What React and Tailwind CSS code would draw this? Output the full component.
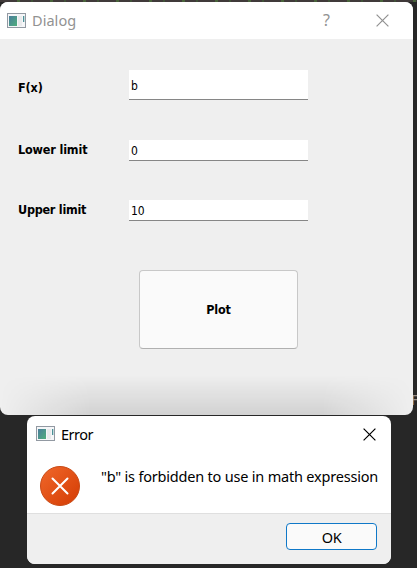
function AppIcon() {
  return (
    <svg width="19" height="16" viewBox="0 0 19 16" className="shrink-0">
      <defs>
        <linearGradient id="screen" x1="0" y1="0" x2="1" y2="1">
          <stop offset="0" stopColor="#4a7d9c" />
          <stop offset="1" stopColor="#4fae7c" />
        </linearGradient>
      </defs>
      <rect x="0.5" y="0.5" width="18" height="14" fill="#f5f6f8" stroke="#9299a2" />
      <rect x="2" y="3" width="8" height="10" fill="url(#screen)" />
      <rect x="11" y="3" width="4" height="10" fill="#e9eaec" />
      <rect x="16" y="3" width="1.3" height="6" fill="#4b9197" />
    </svg>
  );
}

function Cross({ className }) {
  return (
    <svg width="13" height="13" viewBox="0 0 13 13" className={className} fill="none" stroke="currentColor" strokeWidth="1.2">
      <path d="M.6.6l11.8 11.8M12.4.6L.6 12.4" />
    </svg>
  );
}

function Field({ label, value, rowClass, labelClass, inputClass }) {
  return (
    <div className={`flex pl-[18px] ${rowClass}`}>
      <label className={`w-[111px] shrink-0 font-['DejaVu_Sans_Condensed','DejaVu_Sans',sans-serif] text-[12.5px] leading-[20px] font-bold ${labelClass}`}>
        {label}
      </label>
      <div className={`flex w-[179px] items-center border-b border-[#868686] bg-white pt-[2px] pl-[2px] font-['DejaVu_Sans_Condensed','DejaVu_Sans',sans-serif] text-[12px] tracking-[-0.2px] ${inputClass}`}>
        {value}
      </div>
    </div>
  );
}

export default function App() {
  return (
    <div className="relative flex h-[568px] w-[417px] flex-col overflow-hidden bg-[#272727] pt-[2px] font-['Noto_Sans',sans-serif] text-black">
      <div className="absolute inset-x-0 top-0 h-[2px] bg-[repeating-linear-gradient(90deg,#403a3a_0_17px,#48633a_17px_20px,#403a3a_20px_31px,#3f5237_31px_33px)]" />
      <span className="absolute top-[390px] left-[411px] text-[14px] leading-[20px] text-[#9a8f86]">F</span>

      <section className="relative h-[413px] w-[413px] shrink-0 overflow-hidden rounded-[8px] bg-[#efefef]">
        <header className="flex h-[37px] items-center bg-white pr-[24px] pl-[7px] text-[#929292]">
          <AppIcon />
          <h1 className="-mt-[2px] ml-[6px] text-[14.5px] leading-[20px] tracking-[0.05px]">Dialog</h1>
          <span className="-mt-[2px] mr-[46px] ml-auto text-[16px] leading-[20px]">?</span>
          <Cross className="-mt-[1px]" />
        </header>
        <Field label="F(x)" value="b" rowClass="mt-[31px] h-[30px]" labelClass="mt-[8px] tracking-[-0.1px]" inputClass="h-[30px]" />
        <Field label="Lower limit" value="0" rowClass="mt-[40px] h-[21px]" labelClass="tracking-[-0.15px]" inputClass="h-[21px]" />
        <Field label="Upper limit" value="10" rowClass="mt-[39px] h-[21px]" labelClass="tracking-[-0.25px]" inputClass="h-[21px]" />
        <button className="mt-[49px] ml-[139px] flex h-[79px] w-[159px] items-center justify-center rounded-[4px] border border-[#c8c8c8] border-b-[#b0b0b0] bg-[#fafafa] pt-[2px] font-['DejaVu_Sans_Condensed','DejaVu_Sans',sans-serif] text-[12.5px] font-bold tracking-[-0.2px]">
          Plot
        </button>
        <div className="absolute right-0 bottom-0 left-0 h-[40px] bg-linear-to-b from-transparent to-black/12 mask-[linear-gradient(90deg,transparent,black_22%,black_78%,transparent)]" />
      </section>

      <section className="mt-[1px] ml-[27px] flex h-[148px] w-[364px] shrink-0 flex-col overflow-hidden rounded-[8px] bg-white">
        <header className="flex h-[36px] items-center pr-[15px] pl-[9px]">
          <AppIcon />
          <h2 className="ml-[6px] text-[14.5px] leading-[20px] tracking-[-0.5px]">Error</h2>
          <Cross className="ml-auto" />
        </header>
        <div className="flex h-[61px] pt-[14px] pl-[13px]">
          <svg width="40" height="40" viewBox="0 0 40 40" className="shrink-0">
            <defs>
              <linearGradient id="alert" x1="0" y1="0" x2="1" y2="1">
                <stop offset="0" stopColor="#f0682b" />
                <stop offset="1" stopColor="#d43b03" />
              </linearGradient>
            </defs>
            <circle cx="20" cy="20" r="19.5" fill="url(#alert)" stroke="#c84a15" />
            <path d="M12.5 12.5l15 15M27.5 12.5l-15 15" stroke="#fff" strokeWidth="2" strokeLinecap="round" />
          </svg>
          <p className="-mt-[1px] ml-[21px] text-[14.5px] leading-[22px] tracking-[-0.2px] whitespace-nowrap">"b" is forbidden to use in math expression</p>
        </div>
        <footer className="flex grow items-start justify-end border-t border-[#dfdfdf] bg-[#efefef] pt-[9px] pr-[14px]">
          <button className="flex h-[27px] w-[91px] items-center justify-center rounded-[4px] border border-[#0f78c8] bg-[#fafafa] pt-[2px] text-[14.5px] tracking-[-0.3px]">OK</button>
        </footer>
      </section>
    </div>
  );
}
